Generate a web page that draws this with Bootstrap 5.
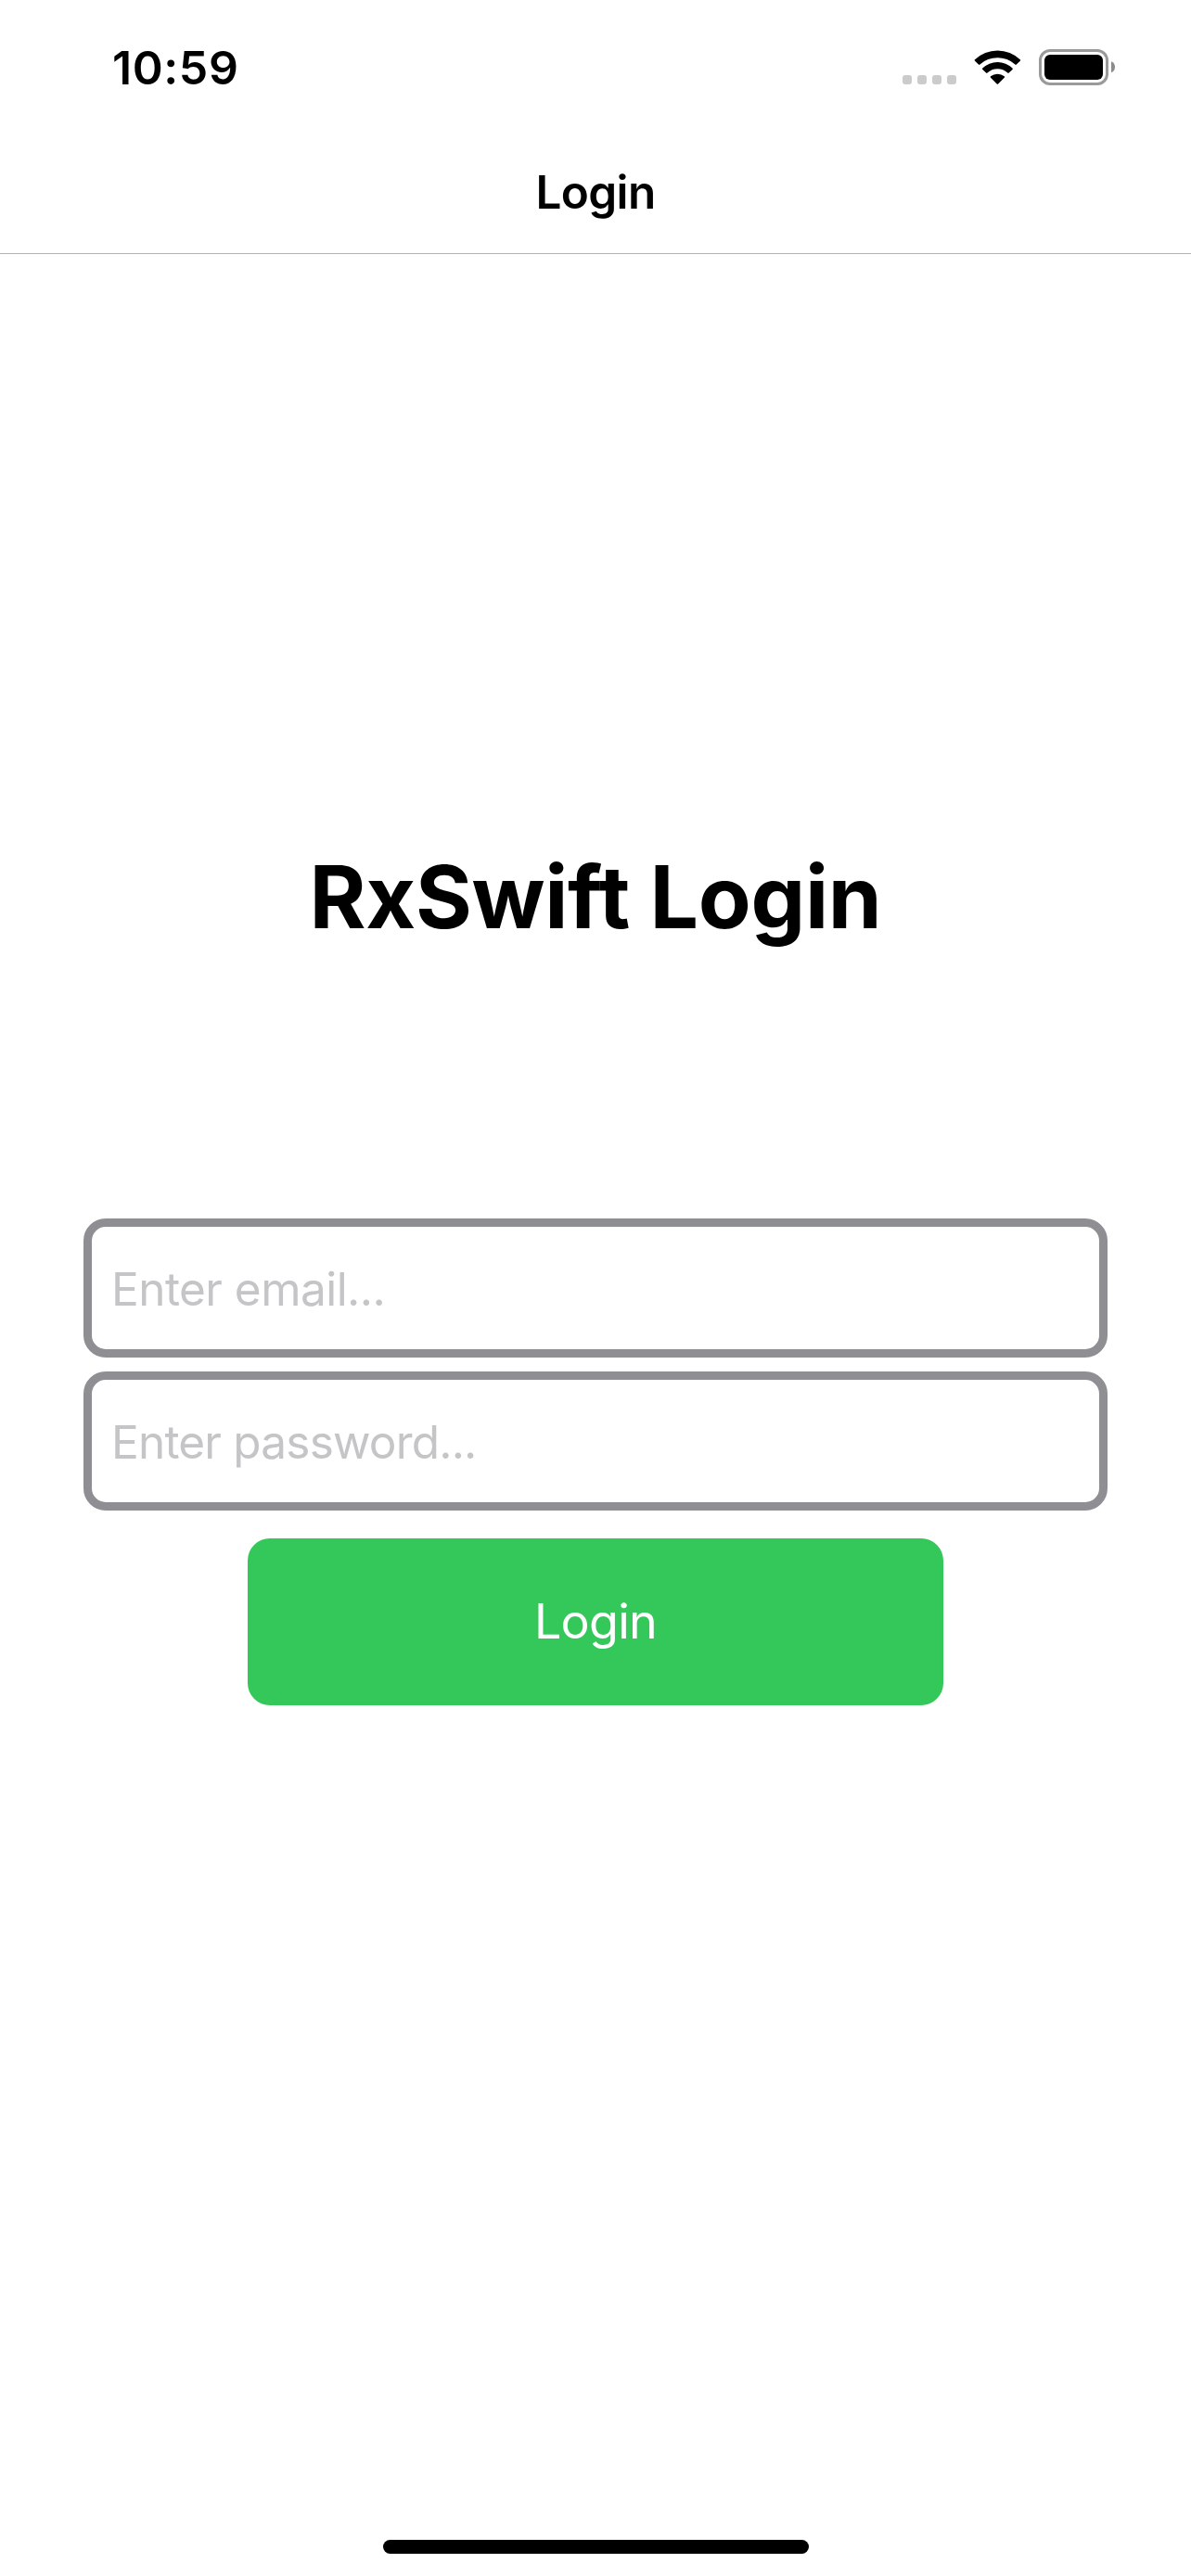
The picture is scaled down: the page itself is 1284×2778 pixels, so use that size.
<!DOCTYPE html>
<html lang="en">
<head>
<meta charset="utf-8">
<meta name="viewport" content="width=device-width, initial-scale=1">
<title>Login</title>
<link href="https://cdn.jsdelivr.net/npm/bootstrap@5.3.0/dist/css/bootstrap.min.css" rel="stylesheet">
<style>
  body { font-family: Inter, "Liberation Sans", sans-serif; color: #000; background: #fff; }
  .screen { height: 2778px; overflow: hidden; }
  .status-bar { height: 141px; padding: 5px 81px 0 121px; }
  .clock { font-size: 50px; font-weight: 600; letter-spacing: .6px; line-height: 60px; }
  .status-icons { gap: 18px; }
  .dots { margin-right: 1px; }
  .title-bar { height: 133px; padding: 0; border-bottom: 1px solid #b3b3b3; }
  .title-bar h1 { font-size: 49.5px; font-weight: 600; letter-spacing: -.65px; line-height: 60px; }
  .login-area { padding: 635px 90px 0; }
  .headline { font-size: 93px; font-weight: 700; letter-spacing: -.33px; line-height: 116px; margin-bottom: 289px; }
  .login-form { gap: 15px; }
  .login-form .form-control {
    height: 150px; padding: 2px 21px 0; border: 9px solid #8e8e93; border-radius: 24px;
    font-size: 49.5px; letter-spacing: -.55px; color: #000;
  }
  .login-form .form-control[type=password] { letter-spacing: -.8px; }
  .login-form .form-control::placeholder { color: #c5c5c7; opacity: 1; }
  .btn-login {
    --bs-btn-color: #fff; --bs-btn-bg: #34c759; --bs-btn-border-color: #34c759;
    --bs-btn-hover-color: #fff; --bs-btn-hover-bg: #2fb350;
    width: 750px; height: 180px; margin-top: 15px; border: 0; border-radius: 24px;
    font-size: 52px; letter-spacing: -.75px; line-height: 64px;
  }
  .home-bar { width: 459px; height: 15px; margin-bottom: 24px; }
</style>
<script src="https://cdn.jsdelivr.net/npm/bootstrap@5.3.0/dist/js/bootstrap.bundle.min.js"></script>
</head>
<body>
<div class="screen d-flex flex-column">
  <div class="status-bar d-flex justify-content-between align-items-center">
    <span class="clock">10:59</span>
    <div class="status-icons d-flex align-items-center">
      <svg class="dots" width="58" height="40" viewBox="0 0 58 40" fill="#cbcbcb" aria-hidden="true">
        <rect x="0" y="28" width="10" height="10" rx="3"/>
        <rect x="16" y="28" width="10" height="10" rx="3"/>
        <rect x="32" y="28" width="10" height="10" rx="3"/>
        <rect x="48" y="28" width="10" height="10" rx="3"/>
      </svg>
      <svg width="52" height="40" viewBox="0 0 52 40" aria-hidden="true">
        <path d="M1 12.7Q.3 12 1 11.3A35 35 0 0 1 49.8 11.3Q50.5 12 49.8 12.7L45.8 16.6Q45.1 17.3 44.4 16.6A28 28 0 0 0 6.4 16.6Q5.7 17.3 5 16.6Z"/>
        <path d="M9.3 21.9Q8.6 21.2 9.3 20.5A23 23 0 0 1 41.5 20.5Q42.2 21.2 41.5 21.9L37.7 25.6Q37 26.3 36.3 25.6A15.8 15.8 0 0 0 14.5 25.6Q13.8 26.3 13.1 25.6Z"/>
        <path d="M18 30.7Q17.3 30 18 29.3A11.6 11.6 0 0 1 32.8 29.3Q33.5 30 32.8 30.7L26.1 37.5Q25.4 38.2 24.7 37.5Z"/>
      </svg>
      <svg width="83" height="40" viewBox="0 0 83 40" aria-hidden="true">
        <rect x="1.5" y="1.5" width="72" height="36" rx="10.5" fill="none" stroke="#9a9a9a" stroke-width="3"/>
        <rect x="6" y="6" width="63" height="27" rx="6"/>
        <path d="M78 13.3Q82 15 82 19.3Q82 23.600 78 25.300Z" fill="#8c8c8c"/>
      </svg>
    </div>
  </div>
  <nav class="title-bar navbar justify-content-center">
    <h1 class="m-0">Login</h1>
  </nav>
  <main class="login-area flex-grow-1">
    <h2 class="headline text-center mt-0">RxSwift Login</h2>
    <form class="login-form d-flex flex-column align-items-center">
      <input class="form-control" type="email" placeholder="Enter email..." aria-label="Email">
      <input class="form-control" type="password" placeholder="Enter password..." aria-label="Password">
      <button class="btn btn-login" type="button">Login</button>
    </form>
  </main>
  <div class="home-bar bg-black rounded-pill mx-auto"></div>
</div>
</body>
</html>
